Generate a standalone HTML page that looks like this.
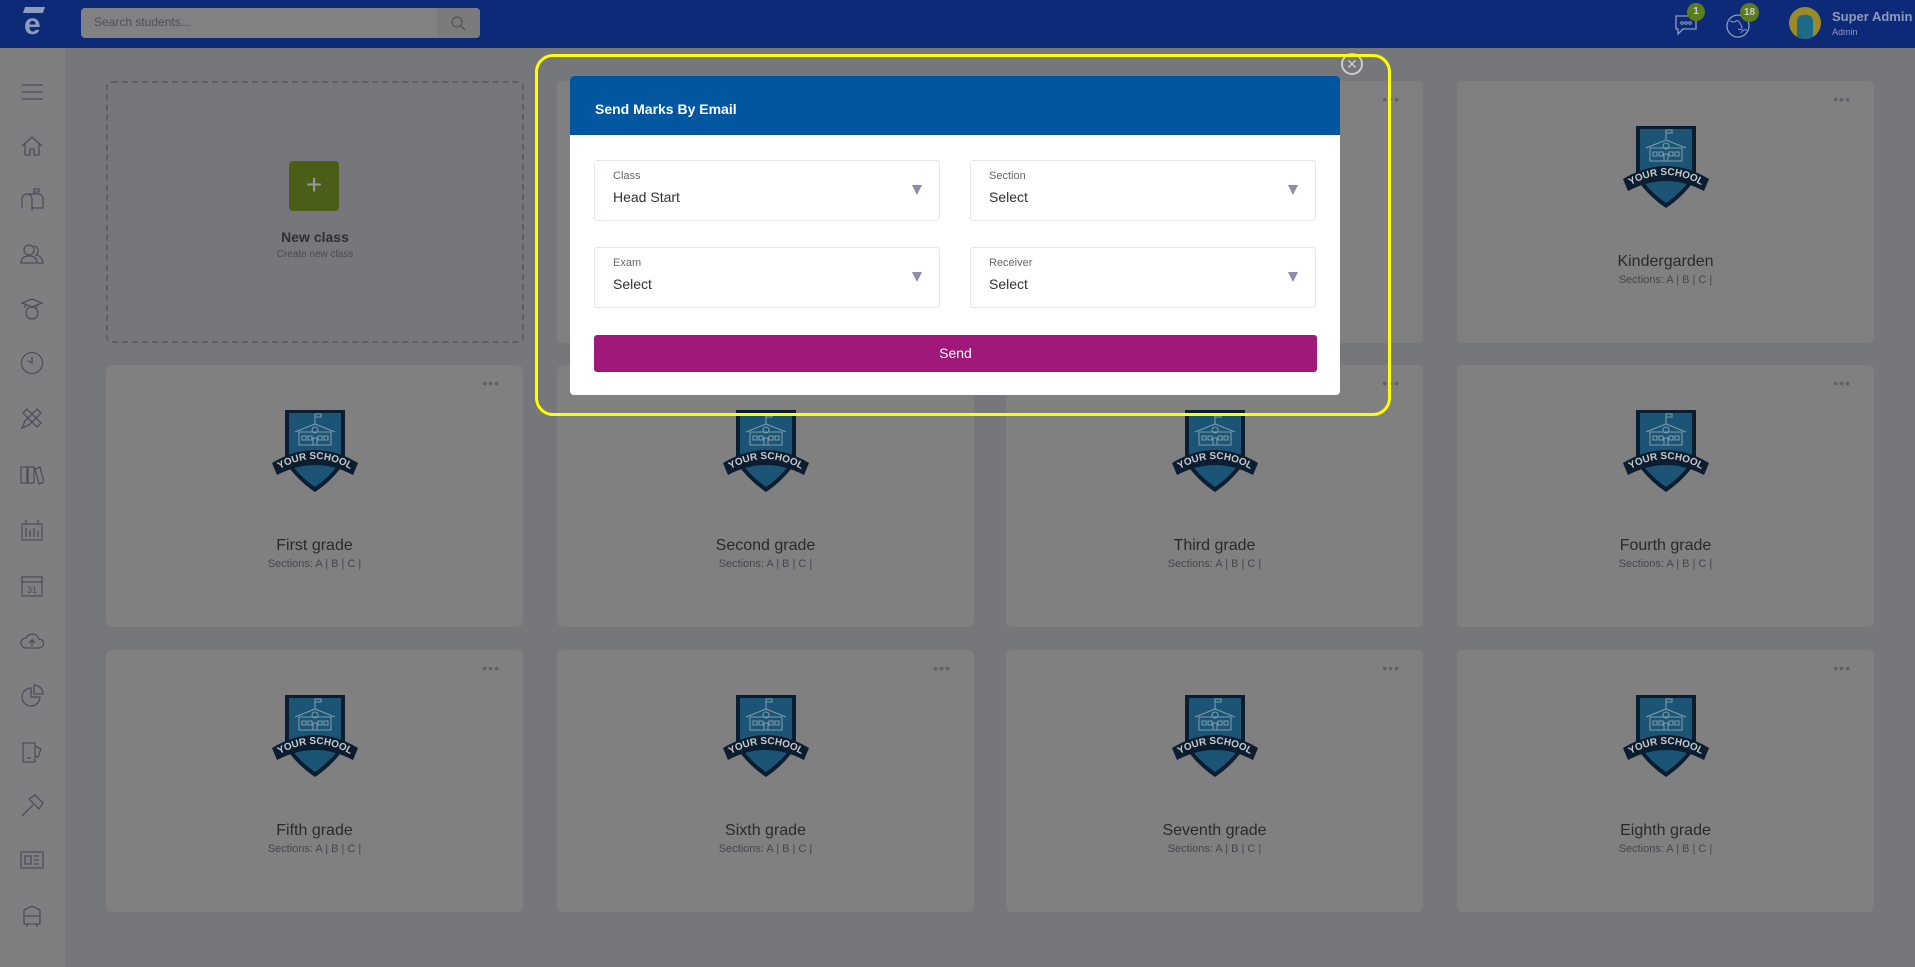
<!DOCTYPE html>
<html><head><meta charset="utf-8"><style>
*{box-sizing:border-box;margin:0;padding:0}
body{width:1915px;height:967px;overflow:hidden;background:#76777a;font-family:"Liberation Sans",sans-serif;position:relative}
.top{position:absolute;left:0;top:0;width:1915px;height:48px;background:#0d2a78}
.search{position:absolute;left:81px;top:8px;width:399px;height:30px;background:#818184;border-radius:4px}
.search span{position:absolute;left:13px;top:7px;font-size:12px;color:#505055}
.search i{position:absolute;right:0;top:0;width:43px;height:30px;background:#7b7b7e;border-radius:0 4px 4px 0}
.side{position:absolute;left:0;top:48px;width:65px;height:919px;background:#7f7f82}
.side svg{position:absolute;left:20px}
.card{position:absolute;width:417px;height:262px;background:#808080;border-radius:5px}
.card .dots{position:absolute;right:23px;top:10px;color:#606068;font-size:14px;letter-spacing:1px}
.card svg{position:absolute;left:164px;top:44px}
.card .t{position:absolute;left:0;right:0;top:172px;text-align:center;font-size:16px;color:#2a2a2e}
.card .s{position:absolute;left:0;right:0;top:193px;text-align:center;font-size:11px;color:#45454f}
.new{position:absolute;left:106px;top:81px;width:418px;height:262px;border:2px dashed #5e5f6a;border-radius:6px}
.modal{position:absolute;left:570px;top:76px;width:770px;height:319px;background:#fff;border-radius:4px;overflow:hidden}
.mh{height:59px;background:#0057a0;color:#fff;font-weight:bold;font-size:14px;padding:25px 0 0 25px}
.f{position:absolute;width:346px;height:61px;border:1px solid #e3e6ee;border-radius:3px}
.f .l{position:absolute;left:18px;top:9px;font-size:11px;color:#666}
.f .v{position:absolute;left:18px;top:28px;font-size:14px;color:#333}
.f .a{position:absolute;right:17px;top:24px;width:0;height:0;border-left:5px solid transparent;border-right:5px solid transparent;border-top:10px solid #8a8ea8}
.btn{position:absolute;left:24px;top:259px;width:723px;height:37px;background:#a0197a;border-radius:3px;color:#fff;text-align:center;font-size:14px;line-height:37px}
.hl{position:absolute;left:535px;top:54px;width:856px;height:362px;border:3.5px solid #ffff00;border-radius:18px}
.close{position:absolute;left:1341px;top:53px;width:22px;height:22px;border:2px solid #ccc;border-radius:50%;color:#ccc;font-size:14px;text-align:center;line-height:18px}
.badge{position:absolute;background:#5c7d1c;color:#ccc;border-radius:50%;font-size:10px;font-weight:bold;text-align:center}
</style></head><body>
<div class="top">
 <div style="position:absolute;left:24px;top:8px;color:#8d9bbf;font-size:30px;font-weight:bold;line-height:34px">e</div>
 <div style="position:absolute;left:24px;top:7px;width:20px;height:6px;background:#8d9bbf;transform:skewX(-20deg)"></div>
 <div class="search"><span>Search students...</span><i></i>
  <svg style="position:absolute;right:14px;top:7px" width="16" height="16"><circle cx="7" cy="7" r="5" fill="none" stroke="#555" stroke-width="1.2"/><path d="M11 11l4 4" stroke="#555" stroke-width="1.5"/></svg></div>
 <svg style="position:absolute;left:1673px;top:12px" width="26" height="26"><path d="M3 4h20v13H10l-5 5v-5H3z" fill="none" stroke="#8d9bbf" stroke-width="1.3"/><circle cx="9" cy="11" r="1.3" fill="none" stroke="#8d9bbf"/><circle cx="13" cy="11" r="1.3" fill="none" stroke="#8d9bbf"/><circle cx="17" cy="11" r="1.3" fill="none" stroke="#8d9bbf"/></svg>
 <div class="badge" style="left:1687px;top:3px;width:18px;height:18px;line-height:18px">1</div>
 <svg style="position:absolute;left:1725px;top:13px" width="26" height="26"><circle cx="13" cy="13" r="11" fill="none" stroke="#8d9bbf" stroke-width="1.3"/><path d="M5 8q4 2 6 0t5 4-3 4M16 20q2-4 6-3" fill="none" stroke="#8d9bbf"/></svg>
 <div class="badge" style="left:1740px;top:3px;width:19px;height:19px;line-height:19px">18</div>
 <div style="position:absolute;left:1789px;top:7px;width:32px;height:32px;border-radius:50%;background:#9c8a2a;overflow:hidden"><div style="position:absolute;left:8px;top:8px;width:16px;height:24px;background:#1d6b86;border-radius:6px 6px 0 0"></div></div>
 <div style="position:absolute;left:1832px;top:9px;color:#8d9bbf;font-size:13px;font-weight:bold">Super Admin</div>
 <div style="position:absolute;left:1832px;top:27px;color:#8d9bbf;font-size:9px">Admin</div>
</div>
<div class="side">
<svg style="top:32px" width="24" height="24" stroke="#4d4e5c" fill="none" stroke-width="1.3"><path d="M2 5h21M2 12h21M2 19h21"/></svg>
<svg style="top:86px" width="24" height="24" stroke="#4d4e5c" fill="none" stroke-width="1.3"><path d="M2 12L12 3l10 9M5 10v11h5v-6h4v6h5V10"/></svg>
<svg style="top:140px" width="24" height="24" stroke="#4d4e5c" fill="none" stroke-width="1.3"><path d="M2 20V11a5 5 0 0 1 10 0v9h11v-9a5 5 0 0 0-5-5H7M14 6V1h5v3h-5M12 20v3"/></svg>
<svg style="top:194px" width="24" height="24" stroke="#4d4e5c" fill="none" stroke-width="1.3"><circle cx="9" cy="8" r="5"/><path d="M1 21q0-7 8-7t8 7zM14 4a5 5 0 0 1 2 9q6 1 7 8h-5"/></svg>
<svg style="top:249px" width="24" height="24" stroke="#4d4e5c" fill="none" stroke-width="1.3"><path d="M2 6l10-4 10 4-10 4zM5 8v3M17 8v3"/><circle cx="12" cy="16" r="6"/></svg>
<svg style="top:303px" width="24" height="24" stroke="#4d4e5c" fill="none" stroke-width="1.3"><circle cx="12" cy="12" r="10.5"/><path d="M12 6v6l-4-2"/></svg>
<svg style="top:358px" width="24" height="24" stroke="#4d4e5c" fill="none" stroke-width="1.3"><path d="M2 22l3-7L17 3l4 4L9 19zM3 7l4-4 14 14-4 4z"/></svg>
<svg style="top:414px" width="24" height="24" stroke="#4d4e5c" fill="none" stroke-width="1.3"><path d="M1 5h6v16H1zM8 5h6v16H8zM15 7l5-2 4 15-5 2z"/></svg>
<svg style="top:470px" width="24" height="24" stroke="#4d4e5c" fill="none" stroke-width="1.3"><path d="M2 6h20v16H2zM6 2v4M18 2v4M6 10v9M10 12v7M14 10v9M18 13v6"/></svg>
<svg style="top:526px" width="24" height="24" stroke="#4d4e5c" fill="none" stroke-width="1.3"><rect x="2" y="3" width="20" height="19"/><path d="M2 8h20"/><text x="7" y="19" font-size="9" fill="#4d4e5c" stroke="none">31</text></svg>
<svg style="top:581px" width="24" height="24" stroke="#4d4e5c" fill="none" stroke-width="1.3"><path d="M6 19a5 5 0 0 1 0-10 7 7 0 0 1 13 1 4 4 0 0 1 0 9zM12 17v-6l-3 3M12 11l3 3"/></svg>
<svg style="top:636px" width="24" height="24" stroke="#4d4e5c" fill="none" stroke-width="1.3"><path d="M11 4a9 9 0 1 0 9 9h-9zM14 1v9h9a9 9 0 0 0-9-9"/></svg>
<svg style="top:692px" width="24" height="24" stroke="#4d4e5c" fill="none" stroke-width="1.3"><path d="M3 3h12v19H3zM15 6l6 3-3 8-3-1M7 18h4"/></svg>
<svg style="top:746px" width="24" height="24" stroke="#4d4e5c" fill="none" stroke-width="1.3"><path d="M2 22l11-11M9 5l6-4 8 8-4 6zM11 7l6 6"/></svg>
<svg style="top:800px" width="24" height="24" stroke="#4d4e5c" fill="none" stroke-width="1.3"><rect x="1" y="4" width="22" height="16"/><path d="M5 8h6v8H5zM14 8h5M14 12h5M14 16h5"/></svg>
<svg style="top:856px" width="24" height="24" stroke="#4d4e5c" fill="none" stroke-width="1.3"><path d="M4 20V6l8-4 8 4v14zM4 12h16M7 20v3M17 20v3"/></svg>
</div>

<div class="new">
 <div style="position:absolute;left:181px;top:78px;width:50px;height:50px;background:#4a5e18;border-radius:4px;color:#999;font-size:28px;text-align:center;line-height:48px">+</div>
 <div style="position:absolute;left:0;right:0;top:146px;text-align:center;font-size:14px;font-weight:bold;color:#2f2f33">New class</div>
 <div style="position:absolute;left:0;right:0;top:166px;text-align:center;font-size:10px;color:#4a4a55">Create new class</div>
</div>

<div id="cards"></div>
<script>
let k=0;
function S(){k++;return '<svg width="90" height="86" viewBox="0 0 90 86"><defs><path id="arc'+k+'" d="M10 60 Q45 40 80 60"/></defs><path d="M15 1h60v52q-12 18-30 30q-18-12-30-30z" fill="#0b1d30"/><path d="M19 4h52v48q-10 15-26 26q-16-11-26-26z" fill="#1b5474"/><g stroke="#7d9aab" fill="none" stroke-width="1.1"><path d="M29 36V23h32v13zM25 23l20-8 20 8M45 15V5h6v3h-6"/><circle cx="45" cy="21" r="3"/><path d="M32 27h4v4h-4zM38 27h4v4h-4zM48 27h4v4h-4zM54 27h4v4h-4zM43 36v-7h4v7"/></g><path d="M2 54q43-26 86 0l-5 12q-38-20-76 0z" fill="#0b1d30"/><text font-size="10" font-weight="bold" fill="#c8c8c8" font-family="Liberation Sans" text-anchor="middle"><textPath href="#arc'+k+'" startOffset="50%">YOUR SCHOOL</textPath></text></svg>';}
const cols=[106,557,1006,1457],rows=[81,365,650];
const names=[[null,'','','Kindergarden'],['First grade','Second grade','Third grade','Fourth grade'],['Fifth grade','Sixth grade','Seventh grade','Eighth grade']];
let h='';
rows.forEach((y,r)=>cols.forEach((x,c)=>{const n=names[r][c];if(n===null)return;
h+=`<div class="card" style="left:${x}px;top:${y}px"><div class="dots">•••</div>${S()}<div class="t">${n}</div><div class="s">Sections: A | B | C |</div></div>`;}));
document.getElementById('cards').innerHTML=h;
</script>

<div class="modal">
 <div class="mh">Send Marks By Email</div>
 <div class="f" style="left:24px;top:84px"><div class="l">Class</div><div class="v">Head Start</div><div class="a"></div></div>
 <div class="f" style="left:400px;top:84px"><div class="l">Section</div><div class="v">Select</div><div class="a"></div></div>
 <div class="f" style="left:24px;top:171px"><div class="l">Exam</div><div class="v">Select</div><div class="a"></div></div>
 <div class="f" style="left:400px;top:171px"><div class="l">Receiver</div><div class="v">Select</div><div class="a"></div></div>
 <div class="btn">Send</div>
</div>
<div class="close">✕</div>
<div class="hl"></div>
</body></html>
